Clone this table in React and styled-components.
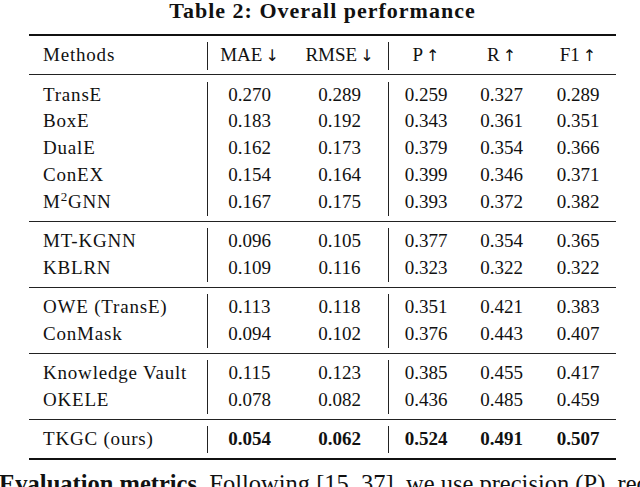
import React from 'react';
import styled, {createGlobalStyle} from 'styled-components';

const GlobalStyle = createGlobalStyle`
  body {
    margin: 0;
    background: #ffffff;
    color: #111;
    font-family: "Liberation Serif", "Times New Roman", serif;
  }
`

const Page = styled.div`
  width: 640px;
  height: 487px;
  overflow: hidden;
`

const Title = styled.div`
  width: 587px;
  margin-left: 29px;
  text-align: center;
  font-weight: 700;
  font-size: 22px;
  letter-spacing: 1px;
  line-height: 22px;
  margin-bottom: 12px;
`

const Table = styled.div`
  width: 587px;
  margin-left: 29px;
  border-top: 2px solid #111;
  border-bottom: 2px solid #111;
`

const Group = styled.div`
  padding: 6.4px 0 5px;
  border-top: ${p => (p.$first ? 'none' : '1px solid #222')};
`

const Row = styled.div`
  display: grid;
  grid-template-columns: 178px 84px 97px 75px 77px 76px;
  height: 26.8px;
  line-height: 26.8px;
  font-size: 19px;
`

const Cell = styled.div`
  text-align: center;
  white-space: nowrap;
  border-left: ${p => (p.$divider ? '1px solid #222' : 'none')};
  font-weight: ${p => (p.$bold ? 700 : 400)};
`

const NameCell = styled(Cell)`
  text-align: left;
  padding-left: 14px;
  letter-spacing: 0.8px;
`

const Arrow = styled.span`
  font-family: "DejaVu Sans", sans-serif;
  font-size: 16px;
  color: #111;
  margin-left: 3px;
`

const Sup = styled.sup`
  font-size: 13px;
  line-height: 0;
  vertical-align: 7px;
`

const Paragraph = styled.div`
  margin-top: 12px;
  margin-left: -1px;
  white-space: nowrap;
  font-size: 24.5px;
  line-height: 24px;
`

const headers = [['MAE', '↓'], ['RMSE', '↓'], ['P', '↑'], ['R', '↑'], ['F1', '↑']]

const groups = [
    [
        ['TransE', '0.270', '0.289', '0.259', '0.327', '0.289'],
        ['BoxE', '0.183', '0.192', '0.343', '0.361', '0.351'],
        ['DualE', '0.162', '0.173', '0.379', '0.354', '0.366'],
        ['ConEX', '0.154', '0.164', '0.399', '0.346', '0.371'],
        [<>M<Sup>2</Sup>GNN</>, '0.167', '0.175', '0.393', '0.372', '0.382'],
    ],
    [
        ['MT-KGNN', '0.096', '0.105', '0.377', '0.354', '0.365'],
        ['KBLRN', '0.109', '0.116', '0.323', '0.322', '0.322'],
    ],
    [
        ['OWE (TransE)', '0.113', '0.118', '0.351', '0.421', '0.383'],
        ['ConMask', '0.094', '0.102', '0.376', '0.443', '0.407'],
    ],
    [
        ['Knowledge Vault', '0.115', '0.123', '0.385', '0.455', '0.417'],
        ['OKELE', '0.078', '0.082', '0.436', '0.485', '0.459'],
    ],
]

const ours = ['TKGC (ours)', '0.054', '0.062', '0.524', '0.491', '0.507']

function DataRow({cells, bold}) {
    return (
        <Row>
            <NameCell>{cells[0]}</NameCell>
            {cells.slice(1).map((v, i) => (
                <Cell key={i} $divider={i === 0 || i === 2} $bold={bold}>{v}</Cell>
            ))}
        </Row>
    )
}

export default function App() {
    return (
        <Page>
            <GlobalStyle/>
            <Title>Table 2: Overall performance</Title>
            <Table>
                <Group $first>
                    <Row>
                        <NameCell>Methods</NameCell>
                        {headers.map(([label, arrow], i) => (
                            <Cell key={label} $divider={i === 0 || i === 2}>
                                {label}<Arrow>{arrow}</Arrow>
                            </Cell>
                        ))}
                    </Row>
                </Group>
                {groups.map((rows, gi) => (
                    <Group key={gi}>
                        {rows.map((r, ri) => <DataRow key={ri} cells={r}/>)}
                    </Group>
                ))}
                <Group>
                    <DataRow cells={ours} bold/>
                </Group>
            </Table>
            <Paragraph>
                <b>Evaluation metrics.</b> Following [15, 37], we use precision (P), recall (R)
            </Paragraph>
        </Page>
    );
}
